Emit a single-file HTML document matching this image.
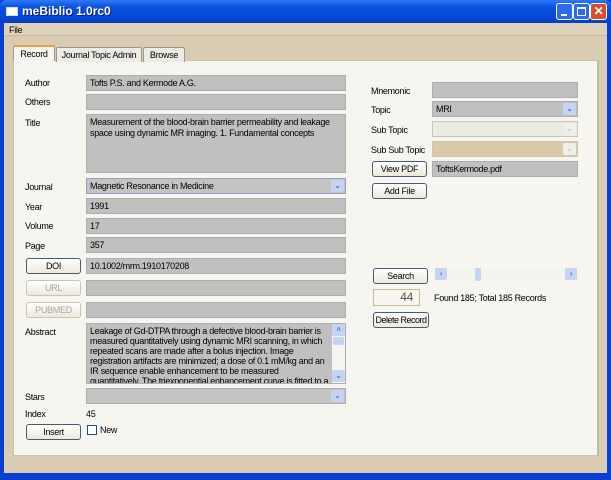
<!DOCTYPE html>
<html><head><style>
*{margin:0;padding:0;box-sizing:border-box}
body{width:611px;height:480px;overflow:hidden;font-family:"Liberation Sans",Tahoma,sans-serif;font-size:9px;letter-spacing:-0.3px;color:#000;background:#0a3fd0;position:relative}
.a{position:absolute}
.tb{left:0;top:0;width:611px;height:23px;background:linear-gradient(#2f7af5,#0a52e0 30%,#0746d6 80%,#0a3fb8);border-radius:6px 6px 0 0}
.tt{left:22px;top:4px;color:#fff;font-weight:bold;font-size:12px;letter-spacing:0;text-shadow:1px 1px #0a1f80}
.win{left:4px;top:23px;width:603px;height:450px;background:#d9ccb3}
.panel{left:13px;top:60px;width:586px;height:396px;background:#f6f5ef;border:1px solid #c8c3b0;border-right:2px solid #c0bba8}
.tab{height:15px;border:1px solid #9a9a8a;border-bottom:none;background:#ecebe4;font-size:9px;text-align:center;padding-top:2px;border-radius:2px 2px 0 0;white-space:nowrap}
.f{background:#c0c0c0;border:1px solid #aeaeae;height:16px;padding:2px 3px;font-size:9px;white-space:nowrap;overflow:hidden}
.l{font-size:9px;white-space:nowrap}
.btn{border:1px solid #4a5a70;border-radius:3px;background:linear-gradient(#fff,#ece9dc);height:16px;text-align:center;font-size:9px;padding-top:2px;white-space:nowrap}
.dis{border-color:#c8c5b8;color:#a8a698}
.arr{position:absolute;right:1px;top:1px;width:13px;height:12px;background:#c6d4f4;border-radius:2px;color:#3050a0;font-size:8px;text-align:center;line-height:12px}
.wb{top:3px;width:17px;height:17px;border:1px solid #fff;border-radius:3px;background:#2a6bf0}
</style></head><body>
<div class="a tb"></div>
<div class="a" style="left:6px;top:7px;width:12px;height:9px;background:#fff;border:1px solid #cde"></div>
<div class="a tt">meBiblio 1.0rc0</div>
<div class="a wb" style="left:556px"><div class="a" style="left:4px;top:10px;width:6px;height:2px;background:#fff"></div></div>
<div class="a wb" style="left:573px"><div class="a" style="left:3px;top:3px;width:9px;height:9px;border:1px solid #fff;border-top-width:2px"></div></div>
<div class="a wb" style="left:590px;background:#d9502e;color:#fff;font-weight:bold;font-size:12px;text-align:center;line-height:15px">✕</div>
<div class="a win"></div>
<div class="a" style="left:4px;top:23px;width:603px;height:13px;background:#ddd2bc;border-bottom:1px solid #c8b898"></div>
<div class="a l" style="left:9px;top:25px">File</div>
<div class="a panel"></div>
<div class="a tab" style="left:13px;top:45px;width:42px;height:16px;background:#f6f5ef;border-top:2px solid #e8a33a">Record</div>
<div class="a tab" style="left:56px;top:47px;width:86px">Journal Topic Admin</div>
<div class="a tab" style="left:143px;top:47px;width:42px">Browse</div>

<div class="a l" style="left:25px;top:78px">Author</div>
<div class="a f" style="left:86px;top:75px;width:260px">Tofts P.S. and Kermode A.G.</div>
<div class="a l" style="left:25px;top:97px">Others</div>
<div class="a f" style="left:86px;top:94px;width:260px"></div>
<div class="a l" style="left:25px;top:118px">Title</div>
<div class="a f" style="left:86px;top:114px;width:260px;height:59px;white-space:normal;line-height:11px">Measurement of the blood-brain barrier permeability and leakage space using dynamic MR imaging. 1. Fundamental concepts</div>
<div class="a l" style="left:25px;top:182px">Journal</div>
<div class="a f" style="left:86px;top:178px;width:260px;background:#c4c4c4;border-color:#8da2c8">Magnetic Resonance in Medicine<div class="arr">⌄</div></div>
<div class="a l" style="left:25px;top:202px">Year</div>
<div class="a f" style="left:86px;top:198px;width:260px">1991</div>
<div class="a l" style="left:25px;top:221px">Volume</div>
<div class="a f" style="left:86px;top:218px;width:260px">17</div>
<div class="a l" style="left:25px;top:241px">Page</div>
<div class="a f" style="left:86px;top:237px;width:260px">357</div>
<div class="a btn" style="left:26px;top:258px;width:55px">DOI</div>
<div class="a f" style="left:86px;top:258px;width:260px">10.1002/mrm.1910170208</div>
<div class="a btn dis" style="left:26px;top:280px;width:55px">URL</div>
<div class="a f" style="left:86px;top:280px;width:260px"></div>
<div class="a btn dis" style="left:26px;top:302px;width:55px">PUBMED</div>
<div class="a f" style="left:86px;top:302px;width:260px"></div>
<div class="a l" style="left:25px;top:327px">Abstract</div>
<div class="a f" style="left:86px;top:323px;width:260px;height:61px;white-space:normal;line-height:10px;padding-right:16px">Leakage of Gd-DTPA through a defective blood-brain barrier is measured quantitatively using dynamic MRI scanning, in which repeated scans are made after a bolus injection. Image registration artifacts are minimized; a dose of 0.1 mM/kg and an IR sequence enable enhancement to be measured quantitatively. The triexponential enhancement curve is fitted to a theoretical</div>
<div class="a" style="left:332px;top:324px;width:13px;height:59px;background:#f4f4f0"><div class="arr" style="top:0;right:0">˄</div><div class="arr" style="top:46px;right:0">⌄</div><div class="a" style="left:1px;top:13px;width:11px;height:8px;background:#c6d4f4;border-radius:2px"></div></div>
<div class="a l" style="left:25px;top:392px">Stars</div>
<div class="a f" style="left:86px;top:388px;width:260px;background:#c4c4c4">&nbsp;<div class="arr">⌄</div></div>
<div class="a l" style="left:25px;top:409px">Index</div>
<div class="a l" style="left:86px;top:409px">45</div>
<div class="a btn" style="left:26px;top:424px;width:55px">Insert</div>
<div class="a" style="left:87px;top:425px;width:10px;height:10px;border:1px solid #1c5180;background:#fff"></div>
<div class="a l" style="left:100px;top:425px">New</div>

<div class="a l" style="left:371px;top:86px">Mnemonic</div>
<div class="a f" style="left:432px;top:82px;width:146px"></div>
<div class="a l" style="left:371px;top:105px">Topic</div>
<div class="a f" style="left:432px;top:101px;width:146px">MRI<div class="arr">⌄</div></div>
<div class="a l" style="left:371px;top:125px">Sub Topic</div>
<div class="a f" style="left:432px;top:121px;width:146px;background:#ebeae3;border-color:#c8c5b8"><div class="arr" style="background:#f0efe8;color:#bbb">⌄</div></div>
<div class="a l" style="left:371px;top:145px">Sub Sub Topic</div>
<div class="a f" style="left:432px;top:141px;width:146px;background:#dcc9a9;border-color:#c8c5b8"><div class="arr" style="background:#f0efe8;color:#bbb">⌄</div></div>
<div class="a btn" style="left:372px;top:161px;width:55px">View PDF</div>
<div class="a f" style="left:432px;top:161px;width:146px">ToftsKermode.pdf</div>
<div class="a btn" style="left:372px;top:183px;width:55px">Add File</div>
<div class="a btn" style="left:373px;top:268px;width:55px">Search</div>
<div class="a" style="left:435px;top:268px;width:142px;height:13px;background:#f4f4ee"><div class="arr" style="left:0;top:0;width:12px">‹</div><div class="a" style="left:40px;top:0;width:6px;height:13px;background:#c6d4f4;border-radius:2px"></div><div class="arr" style="right:0;top:0;width:12px">›</div></div>
<div class="a" style="left:373px;top:289px;width:47px;height:17px;border:1px solid #c8b898;text-align:right;padding-right:6px;font-size:12px;color:#555;line-height:14px">44</div>
<div class="a l" style="left:434px;top:293px">Found 185; Total 185 Records</div>
<div class="a btn" style="left:373px;top:312px;width:56px;letter-spacing:-0.5px">Delete Record</div>
</body></html>
